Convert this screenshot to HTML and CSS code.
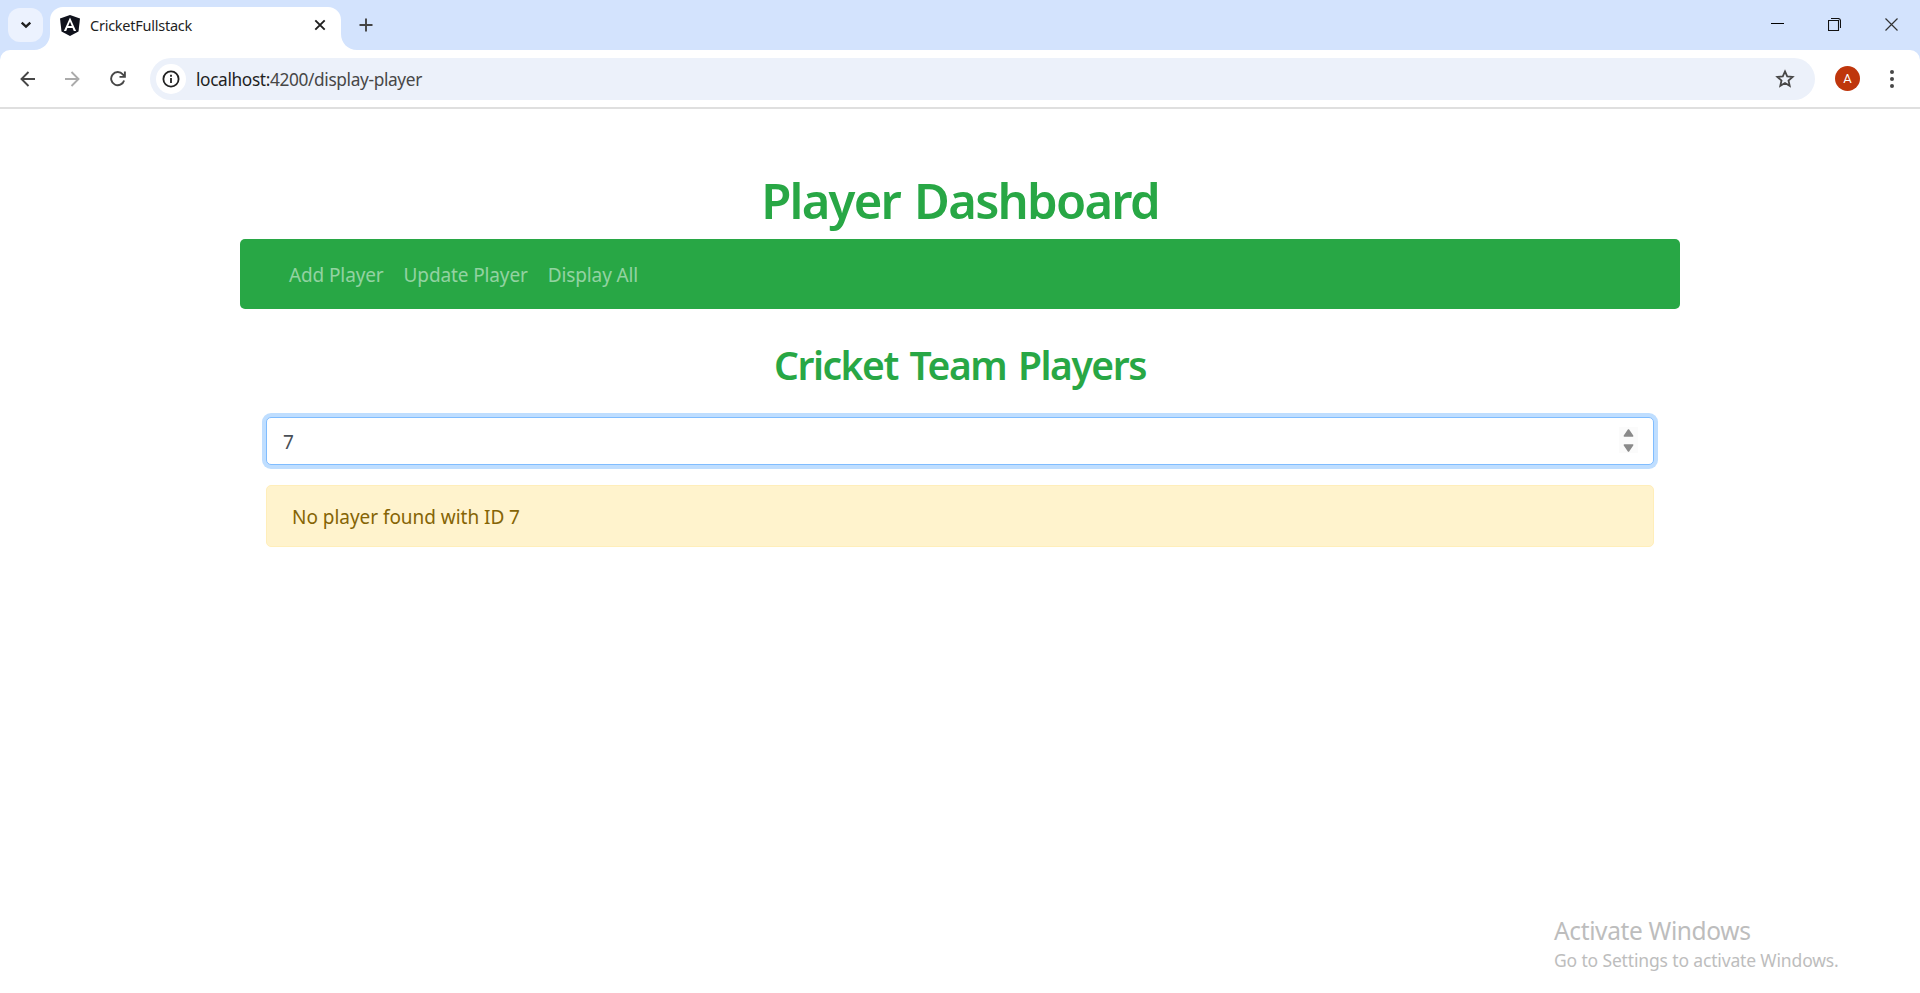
FILE: index.html
```html
<!DOCTYPE html>
<html lang="en">
<head>
<meta charset="utf-8">
<title>CricketFullstack</title>
<link rel="stylesheet" href="styles.css">
</head>
<body>
<div class="browser">
  <header class="tabstrip">
    <div class="tab-search"><svg width="12" height="8" viewBox="0 0 12 8"><path d="M1.7 1.6 6 5.7l4.3-4.1" fill="none" stroke="#1f1f1f" stroke-width="2.3"/></svg></div>
    <div class="tab">
      <svg class="flare flare-left" width="16" height="16" viewBox="0 0 16 16"><path d="M16 0v16H0C9 16 16 9 16 0z" fill="#fff"/></svg>
      <svg class="favicon" width="20" height="21" viewBox="0 0 20 21"><path d="M10 0 20 3.5 18.5 16.6 10 21 1.5 16.6 0 3.5z" fill="#10121c"/><path fill-rule="evenodd" d="M10 2.4 3.9 16h2.3l1.2-3.1h5.2l1.2 3.1h2.3zM10 6.7l1.8 4.3H8.2z" fill="#fff"/></svg>
      <span class="tab-title">CricketFullstack</span>
      <svg class="tab-close" width="12" height="12" viewBox="0 0 12 12"><path d="m1.3 1.3 9.4 9.4m0-9.4-9.4 9.4" stroke="#1f1f1f" stroke-width="1.9"/></svg>
      <svg class="flare flare-right" width="16" height="16" viewBox="0 0 16 16"><path d="M0 0v16h16C7 16 0 9 0 0z" fill="#fff"/></svg>
    </div>
    <svg class="new-tab" width="14" height="14" viewBox="0 0 14 14"><path d="M7 .5v13M.5 7h13" stroke="#444" stroke-width="1.9"/></svg>
    <div class="window-controls">
      <svg width="13" height="13" viewBox="0 0 13 13"><path d="M0 5.5h13" stroke="#000"/></svg>
      <svg width="13" height="13" viewBox="0 0 13 13"><path d="M.5 2.5h10v10H.5zM3 .5h7q2.5 0 2.5 2.5v7" fill="none" stroke="#111" stroke-width="1.1"/></svg>
      <svg width="13" height="13" viewBox="0 0 13 13"><path d="m.5.5 12 12m0-12-12 12" stroke="#333" stroke-width="1.2"/></svg>
    </div>
  </header>
  <div class="toolbar">
    <svg class="back" width="15" height="16" viewBox="0 0 15 16"><path d="M15 8H1.6M8.5 1 1.5 8l7 7" fill="none" stroke="#474747" stroke-width="1.9"/></svg>
    <svg class="forward" width="15" height="16" viewBox="0 0 15 16"><path d="M0 8h13.4M6.5 1l7 7-7 7" fill="none" stroke="#ababab" stroke-width="1.9"/></svg>
    <svg class="reload" width="16" height="16" viewBox="0 0 16 16"><path d="M14.1 9.5A6.6 6.6 0 1 1 12.8 3.4L14.7 5.5M14.9.6v5.3H9.5" fill="none" stroke="#474747" stroke-width="1.9"/></svg>
    <div class="omnibox">
      <div class="site-info"><svg width="18" height="18" viewBox="0 0 18 18"><circle cx="9" cy="9" r="7.6" fill="none" stroke="#222" stroke-width="1.8"/><path d="M9 8v5M9 4.8v2" stroke="#222" stroke-width="1.8"/></svg></div>
      <span class="url">localhost:<span class="path">4200/display-player</span></span>
      <svg class="star" width="20" height="19" viewBox="0 0 20 19"><path d="m10 2.4 2.2 5 5.4.5-4.1 3.6 1.2 5.3-4.7-2.8-4.7 2.8 1.2-5.3-4.1-3.6 5.4-.5z" fill="none" stroke="#474747" stroke-width="1.8"/></svg>
    </div>
    <div class="avatar">A</div>
    <svg class="menu" width="4" height="18" viewBox="0 0 4 18"><g fill="#474747"><circle cx="2" cy="2" r="2"/><circle cx="2" cy="9" r="2"/><circle cx="2" cy="16" r="2"/></g></svg>
  </div>
</div>
<main class="page">
  <h1 class="title"><span>Player Dashboard</span></h1>
  <nav class="navbar"><a class="link-add">Add Player</a><a class="link-update">Update Player</a><a class="link-all">Display All</a></nav>
  <section class="content">
    <h2 class="subtitle"><span>Cricket Team Players</span></h2>
    <div class="field">
      <input class="player-id" type="text" value="7">
      <svg class="spinner" width="19" height="26" viewBox="0 0 19 26"><path fill="#fbfbfb" d="M0 0h19v26H0z"/><path d="M9.5 3 13.6 9H5.4zM9.5 24l4.1-6H5.4z" fill="#8a8a8a" stroke="#8a8a8a" stroke-width="1.6" stroke-linejoin="round"/></svg>
    </div>
    <div class="alert"><span>No player found with ID 7</span></div>
  </section>
</main>
<aside class="watermark"><div class="wm-title">Activate Windows</div><div class="wm-text">Go to Settings to activate Windows.</div></aside>
</body>
</html>
```
FILE: styles.css
```css
* { box-sizing: border-box; }
body { margin: 0; height: 993px; overflow: hidden; background: #fff; font-family: "Noto Sans", "Open Sans", sans-serif; font-size: 19px; }
svg { display: block; flex: none; }
.browser { background: #d3e3fd; height: 109px; }
.tabstrip { height: 50px; display: flex; padding-left: 8px; }
.tab-search { width: 35px; height: 34px; margin-top: 8px; border-radius: 12px; background: #ecf2fe; display: flex; align-items: center; justify-content: center; }
.tab { position: relative; width: 291px; height: 43px; margin: 7px 0 0 7px; padding: 0 15px 7px 10px; background: #fff; border-radius: 13px 13px 0 0; display: flex; align-items: center; }
.flare { position: absolute; bottom: 0; }
.flare-left { left: -16px; }
.flare-right { right: -16px; }
.tab-title { margin-left: 10px; font-size: 14.5px; letter-spacing: -0.25px; color: #1f1f1f; white-space: nowrap; }
.tab-close { margin-left: auto; }
.new-tab { margin: 18px 0 0 18px; }
.window-controls { margin: 18px 22px 0 auto; display: flex; gap: 44px; }
.toolbar { height: 59px; background: #fff; border-radius: 10px 10px 0 0; border-bottom: 2px solid #dfdfdf; display: flex; align-items: center; padding: 0 26px 0 20px; }
.forward { margin-left: 30px; }
.reload { margin-left: 30px; }
.omnibox { width: 1665px; height: 42px; margin-left: 24px; border-radius: 21px; background: #ecf1fa; display: flex; align-items: center; padding: 0 20px 0 6px; }
.site-info { width: 30px; height: 30px; border-radius: 50%; background: #fff; display: flex; align-items: center; justify-content: center; }
.url { margin-left: 10px; padding-top: 2px; font-size: 17.3px; letter-spacing: -0.37px; color: #1f1f1f; white-space: nowrap; }
.path { color: #474747; }
.star { margin-left: auto; }
.avatar { width: 25px; height: 25px; margin-left: 20px; border-radius: 50%; background: #bf360c; color: #fff; font: 13px/25px Roboto, sans-serif; text-align: center; }
.menu { margin-left: auto; }
.page { width: 1440px; margin: 0 auto; padding-top: 60px; }
h1, h2 { margin: 0; color: #28a745; font-weight: 600; text-align: center; white-space: nowrap; }
.title { height: 70px; font-size: 49px; line-height: 63px; letter-spacing: -1.75px; word-spacing: 3px; }
.navbar { height: 70px; border-radius: 5px; background: #28a745; display: flex; align-items: center; gap: 20px; padding: 2px 49px 0; color: rgba(255,255,255,.5); letter-spacing: -0.12px; white-space: nowrap; }
.content { padding: 31px 26px 0; }
.subtitle { height: 77px; font-size: 39px; line-height: 49px; letter-spacing: -1.45px; word-spacing: 3px; }
.field { position: relative; height: 48px; }
.player-id { width: 100%; height: 48px; border: 1px solid #80bdff; border-radius: 5px; padding: 2px 16px 0; box-shadow: 0 0 0 4px #bfdeff; outline: 0; font: inherit; color: #495057; background: #fff; }
.spinner { position: absolute; right: 16px; top: 10px; }
.alert { height: 62px; margin-top: 20px; border: 1px solid #ffeeba; border-radius: 5px; background: #fff3cd; color: #856404; padding: 2px 25px 0; display: flex; align-items: center; letter-spacing: -0.04px; }
.watermark { position: absolute; left: 1554px; top: 914px; color: #bdbdbd; white-space: nowrap; }
.wm-title { font-size: 24.5px; line-height: 34px; letter-spacing: -0.37px; }
.wm-text { font-size: 17.5px; line-height: 24px; letter-spacing: -0.15px; }
```
